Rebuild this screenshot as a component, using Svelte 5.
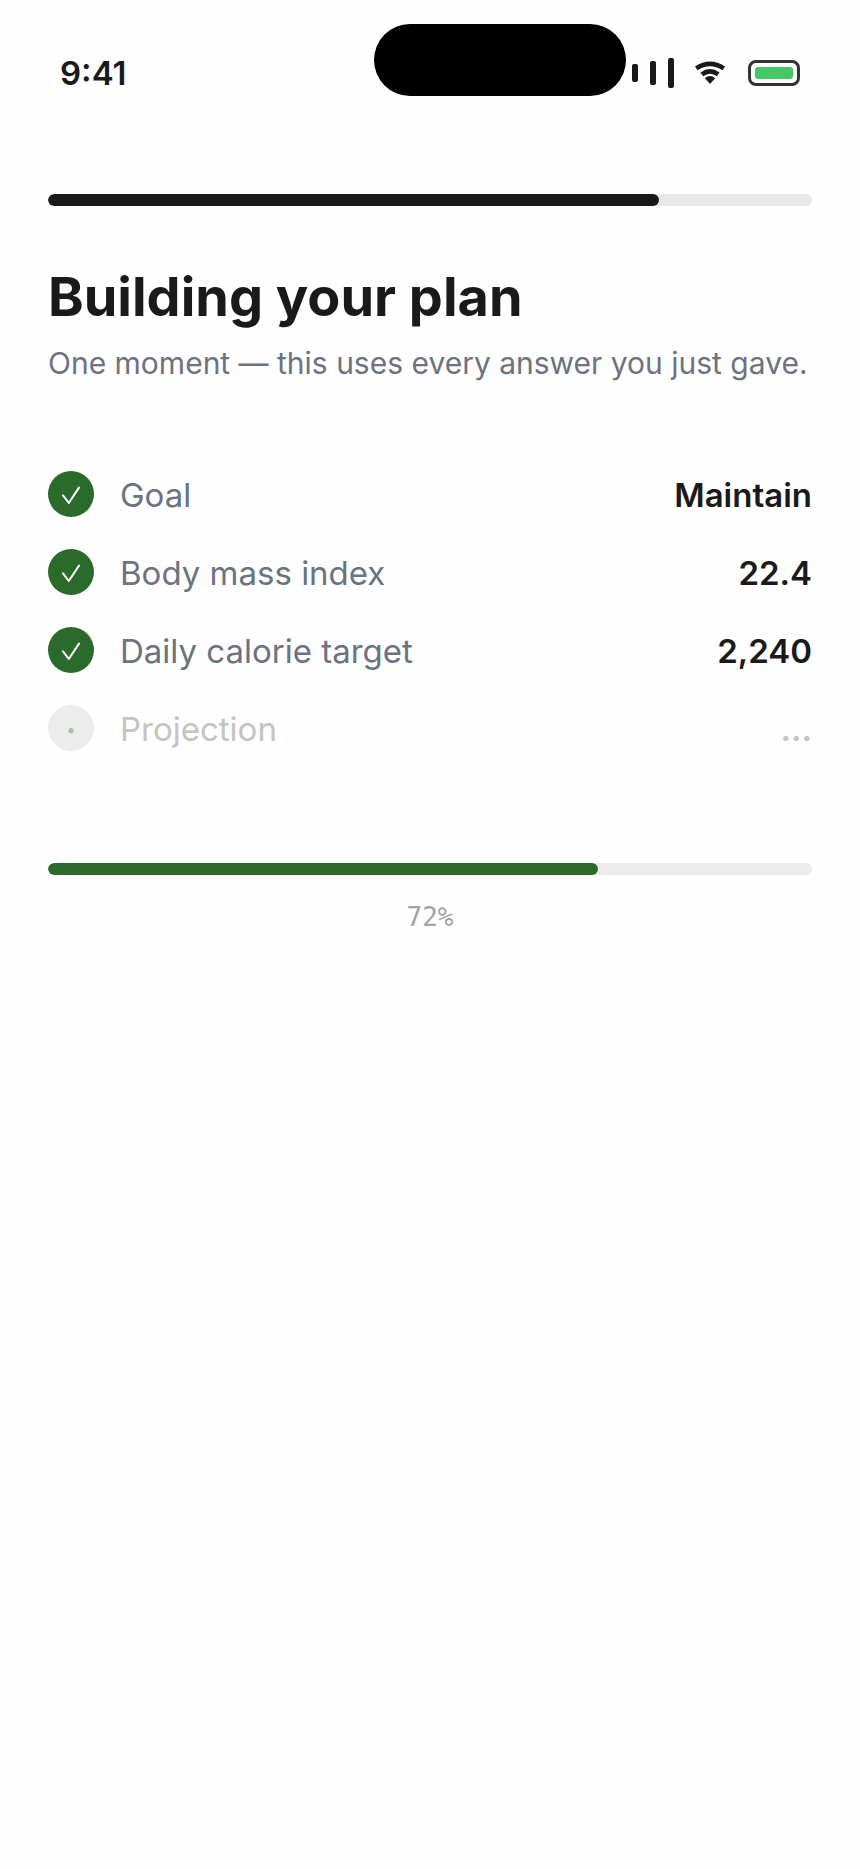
<script lang="ts">
  type Step = { label: string; value: string; done: boolean };

  let { onboarding = 80, percent = 72 }: { onboarding?: number; percent?: number } = $props();

  const steps: Step[] = [
    { label: "Goal", value: "Maintain", done: true },
    { label: "Body mass index", value: "22.4", done: true },
    { label: "Daily calorie target", value: "2,240", done: true },
    { label: "Projection", value: "…", done: false },
  ];
</script>

<header class="status-bar">
  <time>9:41</time>
  <div class="island"></div>
  <div class="indicators">
    <svg class="signal" width="42" height="30" viewBox="0 0 42 30" aria-hidden="true">
      <rect x="0" y="6" width="6" height="18" rx="2" />
      <rect x="18" y="3" width="6" height="24" rx="2" />
      <rect x="36" y="0" width="6" height="30" rx="2" />
    </svg>
    <svg class="wifi" width="32" height="24" viewBox="0 0 32 24" aria-hidden="true">
      <path class="arc" d="M1.2 7.4Q15 -1.8 28.8 7.4" />
      <path class="arc" d="M6.8 13.4Q15 7.4 23.2 13.4" />
      <path d="M9.8 17.2Q15 13 20.2 17.2L15 23Z" />
    </svg>
    <div class="battery"><div class="charge"></div></div>
  </div>
</header>

<main>
  <div class="bar" role="progressbar" aria-label="Onboarding" aria-valuenow={onboarding}>
    <div class="fill" style:width="{onboarding}%"></div>
  </div>

  <h1>Building your plan</h1>
  <p class="subtitle">One moment — this uses every answer you just gave.</p>

  <ul>
    {#each steps as step}
      <li class:pending={!step.done}>
        <svg class="badge" width="46" height="46" viewBox="0 0 46 46" aria-hidden="true">
          <circle class="disc" cx="23" cy="23" r="23" />
          {#if step.done}
            <path class="tick" d="M15 24.4L20.8 32L31 16.6" />
          {:else}
            <circle class="dot" cx="23" cy="25.7" r="2.6" />
          {/if}
        </svg>
        <span class="label">{step.label}</span>
        <span class="value">{step.value}</span>
      </li>
    {/each}
  </ul>

  <div class="bar plan" role="progressbar" aria-label="Plan" aria-valuenow={percent}>
    <div class="fill" style:width="{percent}%"></div>
  </div>
  <p class="percent">{percent}%</p>
</main>

<style>
  :global(body) {
    background: #fefefe;
    color: #1a1a1a;
    font-family: Inter, "Liberation Sans", sans-serif;
  }

  .status-bar {
    position: relative;
    display: flex;
    align-items: center;
    justify-content: space-between;
    padding: 53px 60px 0;
  }

  time {
    font-size: 33px;
    line-height: 40px;
    font-weight: 600;
  }

  .island {
    position: absolute;
    top: 24px;
    left: 50%;
    width: 252px;
    height: 72px;
    margin-left: -56px;
    border-radius: 36px;
    background: #000;
  }

  .indicators {
    display: flex;
    align-items: center;
    gap: 21px;
    fill: #1a1a1a;
  }

  .arc {
    fill: none;
    stroke: #1a1a1a;
    stroke-width: 4.6;
  }

  .battery {
    box-sizing: border-box;
    width: 52px;
    height: 26px;
    padding: 4px;
    border: 3px solid #333;
    border-radius: 8px;
  }

  .charge {
    height: 12px;
    border-radius: 3px;
    background: #46c767;
  }

  main {
    padding: 101px 48px 48px;
  }

  .bar {
    height: 12px;
    border-radius: 6px;
    background: #e8e8e8;
    overflow: hidden;
  }

  .fill {
    height: 100%;
    border-radius: 6px;
    background: #1a1a1a;
  }

  .plan {
    background: #ebedeb;
  }

  .plan .fill {
    background: #2a6b2c;
  }

  h1 {
    margin: 57px 0 0;
    font-size: 54px;
    line-height: 68px;
    font-weight: 700;
  }

  .subtitle {
    margin: 12px 0 0;
    color: #6b7280;
    font-size: 30px;
    line-height: 40px;
  }

  ul {
    display: grid;
    gap: 30px;
    margin: 88px 0 110px;
    padding: 0;
    list-style: none;
  }

  li {
    display: flex;
    align-items: flex-start;
    gap: 26px;
    font-size: 33px;
    line-height: 48px;
  }

  .disc {
    fill: #2a6b2c;
  }

  .tick {
    fill: none;
    stroke: #fff;
    stroke-width: 2;
    stroke-linecap: round;
    stroke-linejoin: round;
  }

  .label {
    flex: 1;
    color: #6b7280;
  }

  .value {
    font-weight: 600;
  }

  .pending .disc {
    fill: #ebedeb;
  }

  .pending .dot {
    fill: #b4b7b4;
  }

  .pending .label,
  .pending .value {
    color: #c2c5c2;
  }

  .percent {
    margin: 26px 0 0;
    color: #9ca3af;
    font-family: "DejaVu Sans Mono", monospace;
    font-size: 26px;
    line-height: 32px;
    text-align: center;
  }
</style>
